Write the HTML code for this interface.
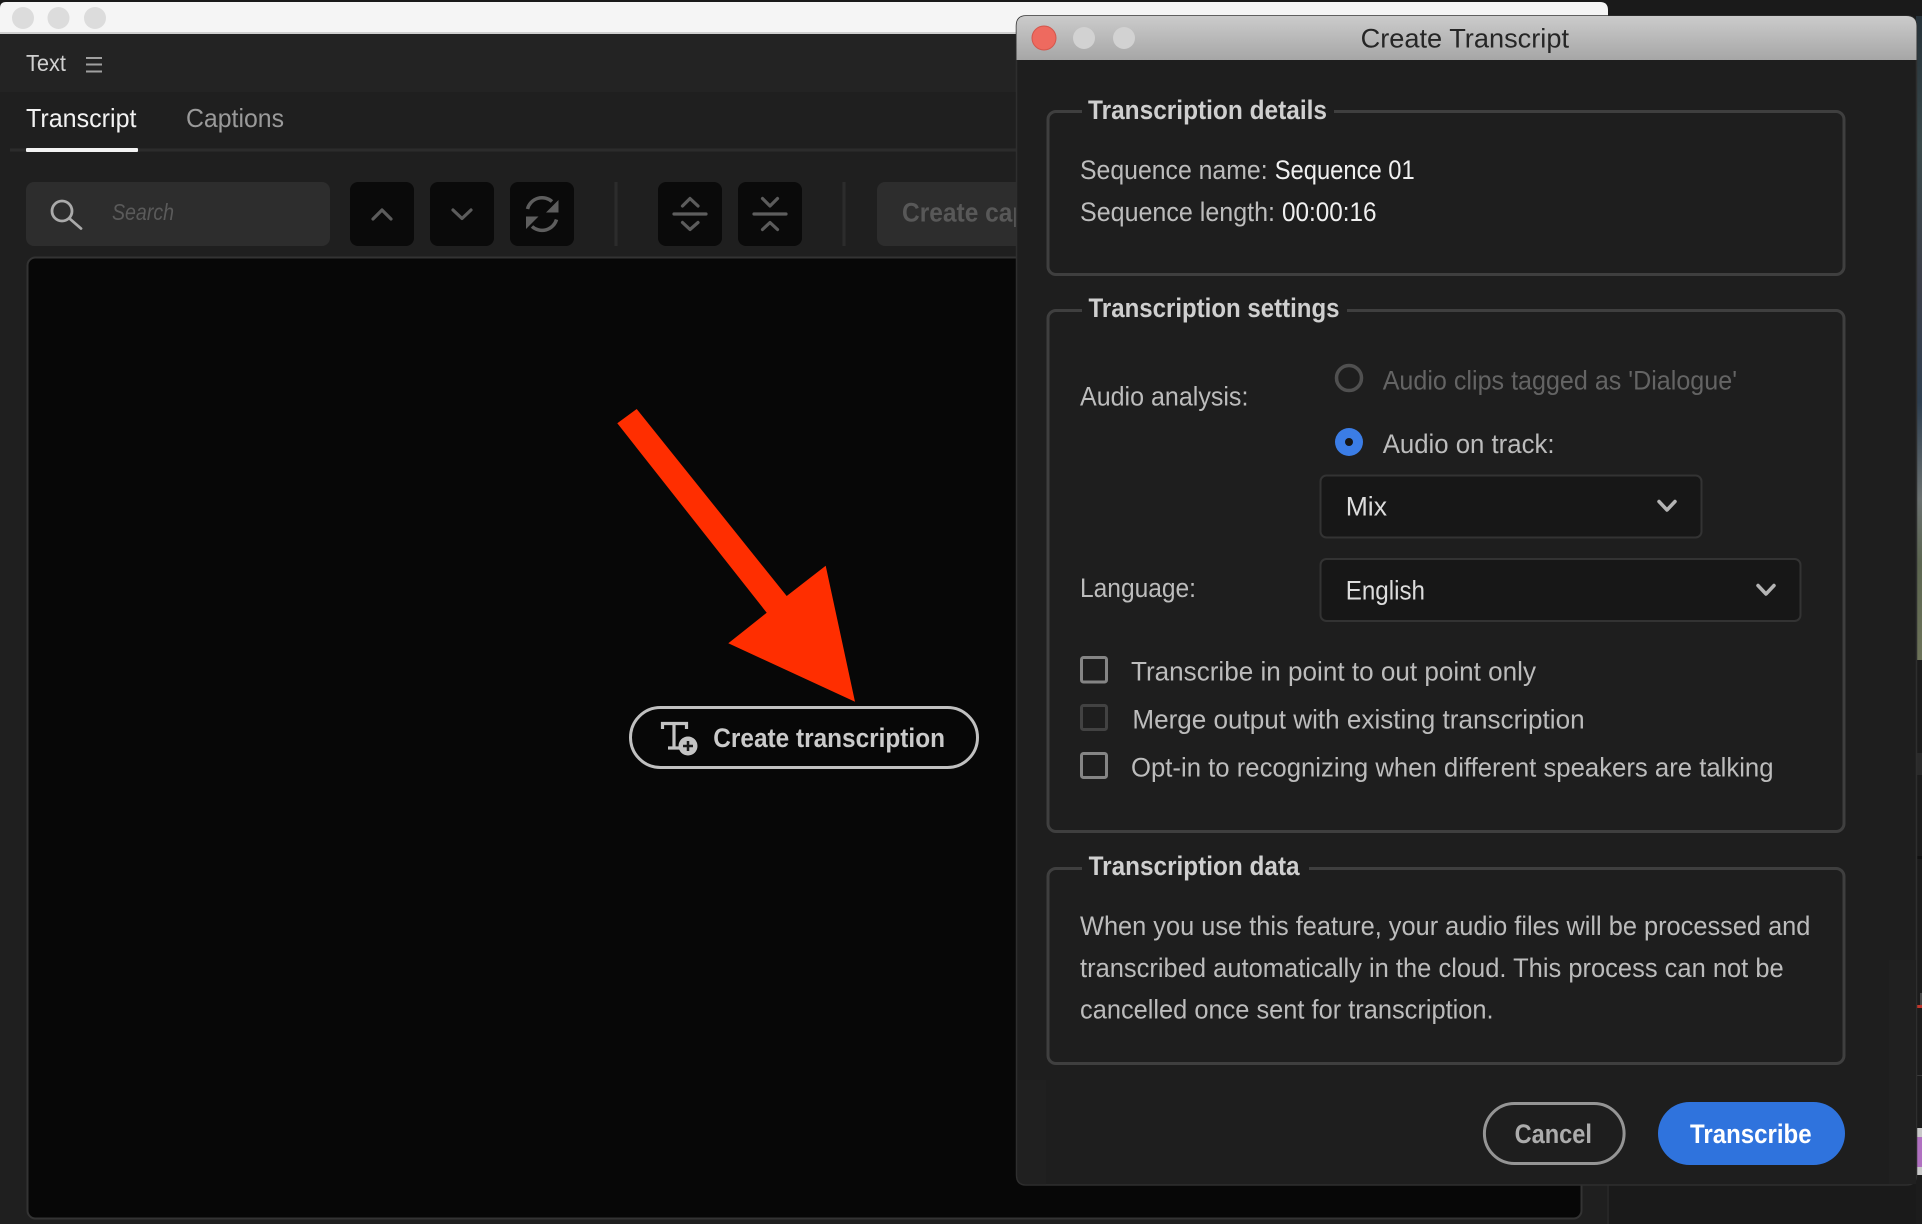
<!DOCTYPE html>
<html lang="en">
<head>
<meta charset="utf-8">
<title>Create Transcript</title>
<style>
html,body{margin:0;padding:0;background:#1a1a1a;width:1922px;height:1224px;overflow:hidden}
svg{display:block;filter:blur(0.35px)}
text{font-family:"Liberation Sans",sans-serif;font-size:27px}
.b{font-weight:700}
.c{fill:#bcbcbc}
.w{fill:#f0f0f0}
.l{fill:#cfcfcf;font-weight:700}
.ic{fill:none;stroke:#5c5c5c;stroke-width:3.2;stroke-linecap:round;stroke-linejoin:round}
</style>
</head>
<body>
<svg xmlns="http://www.w3.org/2000/svg" width="1922" height="1224" viewBox="0 0 1922 1224">
<defs>
<linearGradient id="tb" x1="0" y1="0" x2="0" y2="1"><stop offset="0" stop-color="#cbcbcb"/><stop offset="1" stop-color="#a6a6a6"/></linearGradient>
<linearGradient id="strip" x1="0" y1="0" x2="0" y2="1">
<stop offset="0" stop-color="#26323a"/><stop offset=".2" stop-color="#39484a"/><stop offset=".42" stop-color="#3a3d48"/><stop offset=".6" stop-color="#2e3f50"/><stop offset=".75" stop-color="#6a7070"/><stop offset=".85" stop-color="#5c6650"/><stop offset="1" stop-color="#6c7258"/>
</linearGradient>
</defs>

<!-- backdrop -->
<rect width="1922" height="1224" fill="#1a1a1a"/>
<rect x="1916" y="16" width="6" height="644" fill="url(#strip)"/>
<rect x="1916" y="660" width="6" height="564" fill="#1c1c1c"/>
<rect x="1916" y="753" width="6" height="22" fill="#2a2a2a"/>
<rect x="1916" y="856" width="6" height="3" fill="#111"/>
<rect x="1920" y="993" width="2" height="12" fill="#484848"/>
<rect x="1916" y="1005" width="6" height="3" fill="#c0352a"/>
<rect x="1916" y="1075" width="6" height="1" fill="#3a3a3a"/>
<rect x="1916" y="1128" width="6" height="47" fill="#c8c8c8"/>
<rect x="1916" y="1137" width="6" height="30" fill="#b070c0"/>

<!-- main window -->
<rect x="0" y="33" width="1608" height="1191" fill="#1f1f1f"/>
<rect x="1607" y="33" width="2" height="1191" fill="#262626"/>
<path d="M0 33V8Q0 2 6 2H1600Q1608 2 1608 10V33Z" fill="#f5f5f5"/>
<rect x="0" y="32" width="1608" height="2" fill="#d0d0d0"/>
<circle cx="23" cy="18" r="11" fill="#dcdcdc"/>
<circle cx="58.500" cy="18" r="11" fill="#dcdcdc"/>
<circle cx="95" cy="18" r="11" fill="#dcdcdc"/>
<rect x="0" y="34" width="1608" height="58" fill="#232323"/>
<text x="26" y="71" style="font-size:23px" fill="#d0d0d0" textLength="40" lengthAdjust="spacingAndGlyphs">Text</text>
<rect x="86" y="57" width="16" height="2" fill="#a0a0a0"/>
<rect x="86" y="63.500" width="16" height="2" fill="#a0a0a0"/>
<rect x="86" y="70.500" width="16" height="2" fill="#a0a0a0"/>

<!-- tabs -->
<text x="26" y="127" style="font-size:26px" fill="#f2f2f2" textLength="110.500" lengthAdjust="spacingAndGlyphs">Transcript</text>
<text x="186" y="127" style="font-size:26px" fill="#9a9a9a" textLength="98" lengthAdjust="spacingAndGlyphs">Captions</text>
<rect x="10" y="148.500" width="1010" height="3" fill="#2c2c2c"/>
<rect x="26" y="148" width="112" height="4" rx="1" fill="#f2f2f2"/>

<!-- toolbar -->
<rect x="26" y="182" width="304" height="64" rx="8" fill="#2d2d2d"/>
<circle cx="62" cy="211" r="10" fill="none" stroke="#aaa" stroke-width="2.800"/>
<path d="M69.500 218.500L81 228.500" fill="none" stroke="#aaa" stroke-width="2.800" stroke-linecap="round"/>
<text x="112" y="220" style="font-size:23px;font-style:italic" fill="#5a5a5a" textLength="62" lengthAdjust="spacingAndGlyphs">Search</text>

<rect x="350" y="182" width="64" height="64" rx="8" fill="#0a0a0a"/>
<path class="ic" d="M373 219L382 210L391 219"/>
<rect x="430" y="182" width="64" height="64" rx="8" fill="#0a0a0a"/>
<path class="ic" d="M453 210L462 218.500L471 210"/>
<rect x="510" y="182" width="64" height="64" rx="8" fill="#0a0a0a"/>
<path d="M527.500 209A15 15 0 0 1 552 201.500" fill="none" stroke="#5e5e5e" stroke-width="3.500"/>
<path d="M558.500 200V212.500H546Z" fill="#5e5e5e"/>
<path d="M556.500 219.500A15 15 0 0 1 532 226.500" fill="none" stroke="#5e5e5e" stroke-width="3.500"/>
<path d="M526 216.500H538.500L526 229Z" fill="#5e5e5e"/>
<rect x="614.500" y="182" width="3" height="64" fill="#2c2c2c"/>

<rect x="658" y="182" width="64" height="64" rx="8" fill="#0a0a0a"/>
<path class="ic" d="M682.500 206L690 198.500L698 206M682.500 222.500L690 229.500L698 222.500"/>
<path d="M674 214H706" stroke="#5e5e5e" stroke-width="3.200" stroke-linecap="round"/>
<rect x="738" y="182" width="64" height="64" rx="8" fill="#0a0a0a"/>
<path class="ic" d="M762.500 198.500L770 206L777.500 198.500M762.500 229.500L770 222.500L777.500 229.500"/>
<path d="M754 214H786" stroke="#5e5e5e" stroke-width="3.200" stroke-linecap="round"/>
<rect x="842.500" y="182" width="3" height="64" fill="#2c2c2c"/>
<rect x="877" y="182" width="200" height="64" rx="8" fill="#2d2d2d"/>
<text x="902" y="221.500" class="b" fill="#585858" textLength="184" lengthAdjust="spacingAndGlyphs">Create captions</text>

<!-- black area -->
<rect x="27.500" y="257.500" width="1554" height="961" rx="8" fill="#070707" stroke="#333" stroke-width="2"/>

<!-- arrow -->
<polygon points="617.300,423.300 636.700,409 786.700,596 825.700,565.700 855,701.700 728.300,643.300 766.700,612.700" fill="#ff2e00"/>

<!-- create transcription button -->
<rect x="630.500" y="707.500" width="347" height="60" rx="30" fill="#070707" stroke="#c0c0c0" stroke-width="3"/>
<path d="M662.500 729V723.500H686.500V729M674 723.500V748M668 748H680" fill="none" stroke="#c4c4c4" stroke-width="3.200"/>
<circle cx="688" cy="746" r="9.500" fill="#c4c4c4"/>
<path d="M688 741V751M683 746H693" stroke="#1a1a1a" stroke-width="2.500"/>
<text x="713.300" y="747" class="b" fill="#cacaca" textLength="231.700" lengthAdjust="spacingAndGlyphs">Create transcription</text>

<!-- dialog -->
<path d="M1016.500 26Q1016.500 16 1026 16H1906Q1916.500 16 1916.500 26V1175Q1916.500 1185 1906 1185H1026Q1016.500 1185 1016.500 1175Z" fill="#1e1e1e" stroke="#2e2e2e" stroke-width="1.500"/>
<path d="M1016.500 60V26Q1016.500 16 1026 16H1906Q1916.500 16 1916.500 26V60Z" fill="url(#tb)"/>
<rect x="1889" y="960" width="27" height="224" fill="#202020"/>
<path d="M1017.300 1080H1046V1184.200H1026Q1017.300 1184.200 1017.300 1175Z" fill="#202020"/>
<circle cx="1044" cy="38" r="12" fill="#ee6a5f" stroke="#d4564c" stroke-width="1"/>
<circle cx="1084" cy="38" r="11" fill="#d2d2d2"/>
<circle cx="1124" cy="38" r="11" fill="#d2d2d2"/>
<text x="1360.600" y="47.500" style="font-size:27px" fill="#262626" textLength="208.400" lengthAdjust="spacingAndGlyphs">Create Transcript</text>

<!-- fieldset 1 -->
<rect x="1048" y="111.500" width="796" height="163" rx="8" fill="none" stroke="#3f3f3f" stroke-width="3"/>
<rect x="1082" y="105" width="252" height="12" fill="#1e1e1e"/>
<text x="1088" y="119" class="l" textLength="239" lengthAdjust="spacingAndGlyphs">Transcription details</text>
<text x="1080" y="179" class="c" textLength="187.600" lengthAdjust="spacingAndGlyphs">Sequence name:</text>
<text x="1274.700" y="179" class="w" textLength="140" lengthAdjust="spacingAndGlyphs">Sequence 01</text>
<text x="1080" y="221" class="c" textLength="195" lengthAdjust="spacingAndGlyphs">Sequence length:</text>
<text x="1282" y="221" class="w" textLength="94.500" lengthAdjust="spacingAndGlyphs">00:00:16</text>

<!-- fieldset 2 -->
<rect x="1048" y="310.500" width="796" height="521" rx="8" fill="none" stroke="#3f3f3f" stroke-width="3"/>
<rect x="1082" y="304" width="265" height="12" fill="#1e1e1e"/>
<text x="1088.500" y="317" class="l" textLength="251" lengthAdjust="spacingAndGlyphs">Transcription settings</text>
<text x="1080" y="405.500" class="c" textLength="168.400" lengthAdjust="spacingAndGlyphs">Audio analysis:</text>
<circle cx="1349" cy="378" r="12.500" fill="none" stroke="#505050" stroke-width="3.500"/>
<text x="1382.700" y="389.500" fill="#646464" textLength="354.300" lengthAdjust="spacingAndGlyphs">Audio clips tagged as 'Dialogue'</text>
<circle cx="1349" cy="442" r="14" fill="#3b7de6"/>
<circle cx="1349" cy="442" r="4" fill="#161616"/>
<text x="1382.700" y="453" class="c" textLength="171.800" lengthAdjust="spacingAndGlyphs">Audio on track:</text>

<rect x="1320.500" y="475.500" width="381" height="62" rx="6" fill="#171717" stroke="#333" stroke-width="2"/>
<text x="1345.700" y="515.500" fill="#dcdcdc" textLength="41.300" lengthAdjust="spacingAndGlyphs">Mix</text>
<path d="M1659 501.500L1667 510L1675 501.500" fill="none" stroke="#b4b4b4" stroke-width="3.500" stroke-linecap="round" stroke-linejoin="round"/>

<text x="1080" y="597" class="c" textLength="116" lengthAdjust="spacingAndGlyphs">Language:</text>
<rect x="1320.500" y="559" width="480" height="62" rx="6" fill="#171717" stroke="#333" stroke-width="2"/>
<text x="1345.700" y="599.500" fill="#dcdcdc" textLength="79.300" lengthAdjust="spacingAndGlyphs">English</text>
<path d="M1758 585.500L1766 594L1774 585.500" fill="none" stroke="#b4b4b4" stroke-width="3.500" stroke-linecap="round" stroke-linejoin="round"/>

<rect x="1081.500" y="657.500" width="25" height="24.500" rx="2" fill="none" stroke="#858585" stroke-width="3"/>
<text x="1131" y="680.500" class="c" textLength="405" lengthAdjust="spacingAndGlyphs">Transcribe in point to out point only</text>
<rect x="1081.500" y="705.500" width="25" height="24" rx="2" fill="none" stroke="#424242" stroke-width="3"/>
<text x="1132.400" y="728.700" class="c" textLength="452.200" lengthAdjust="spacingAndGlyphs">Merge output with existing transcription</text>
<rect x="1081.500" y="753.500" width="25" height="24" rx="2" fill="none" stroke="#858585" stroke-width="3"/>
<text x="1131" y="776.500" class="c" textLength="642.500" lengthAdjust="spacingAndGlyphs">Opt-in to recognizing when different speakers are talking</text>

<!-- fieldset 3 -->
<rect x="1048" y="868.500" width="796" height="195" rx="8" fill="none" stroke="#3f3f3f" stroke-width="3"/>
<rect x="1082" y="862" width="227" height="12" fill="#1e1e1e"/>
<text x="1088.600" y="875" class="l" textLength="211" lengthAdjust="spacingAndGlyphs">Transcription data</text>
<text x="1080" y="935" class="c" textLength="730.400" lengthAdjust="spacingAndGlyphs">When you use this feature, your audio files will be processed and</text>
<text x="1080" y="977" class="c" textLength="703.700" lengthAdjust="spacingAndGlyphs">transcribed automatically in the cloud. This process can not be</text>
<text x="1080" y="1018.500" class="c" textLength="413.600" lengthAdjust="spacingAndGlyphs">cancelled once sent for transcription.</text>

<!-- buttons -->
<rect x="1484.400" y="1103.500" width="139.700" height="60" rx="30" fill="#1e1e1e" stroke="#959595" stroke-width="3"/>
<text x="1514.600" y="1143" class="b" fill="#acacac" textLength="77.400" lengthAdjust="spacingAndGlyphs">Cancel</text>
<rect x="1658" y="1102" width="187" height="63" rx="31.500" fill="#2f73dd"/>
<text x="1690" y="1143" class="b" fill="#fff" textLength="121.600" lengthAdjust="spacingAndGlyphs">Transcribe</text>
</svg>
</body>
</html>
